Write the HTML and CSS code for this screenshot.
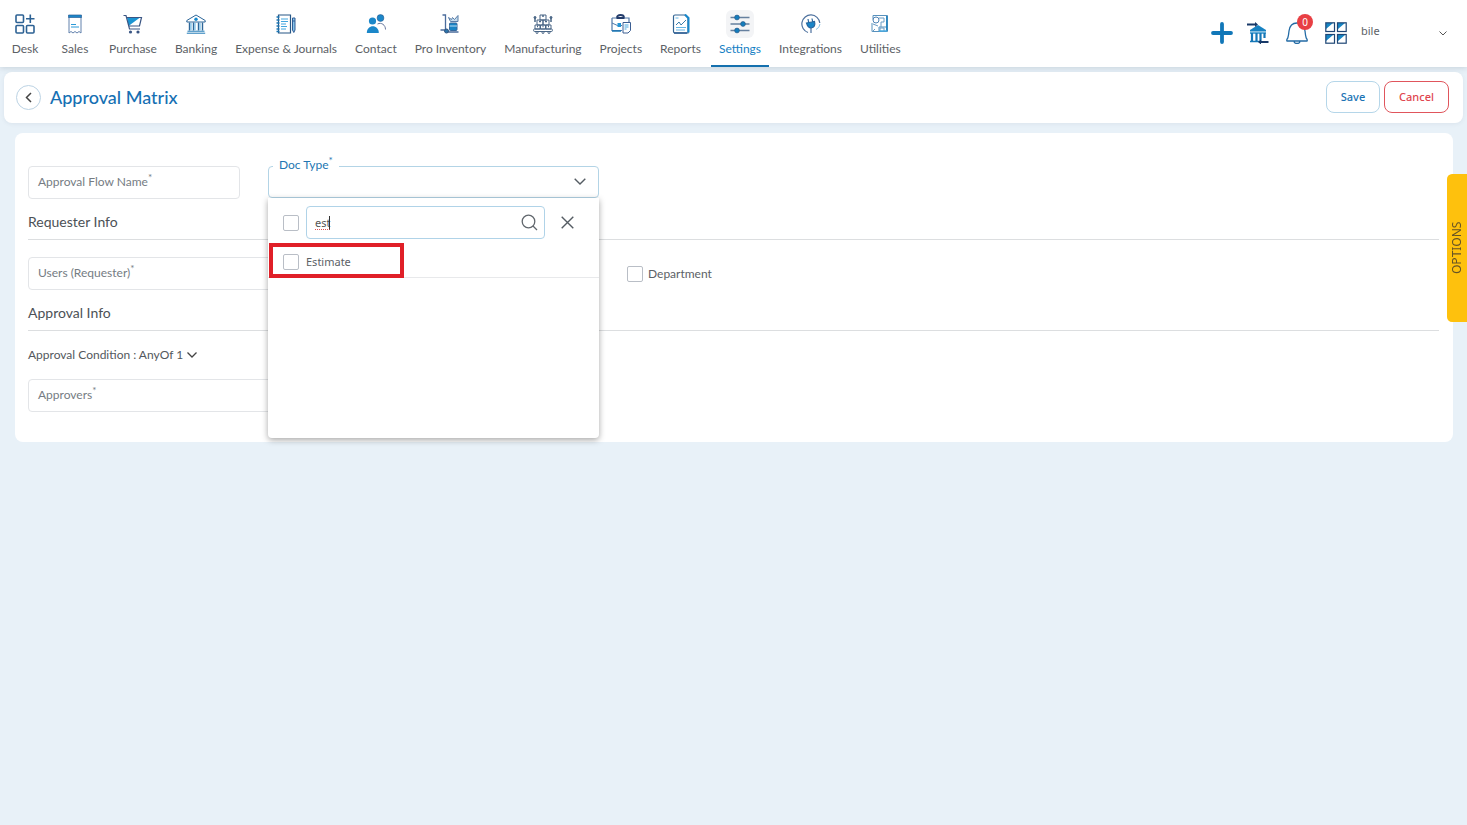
FILE: index.html
```html
<!DOCTYPE html>
<html lang="en">
<head>
<meta charset="utf-8">
<title>Approval Matrix</title>
<link rel="stylesheet" href="styles.css">
</head>
<body>
<header class="topbar">
  <nav class="nav">
    <a class="nav-item" href="#"><span class="nav-icon"><svg viewBox="0 0 20 20" fill="none" stroke="#2d6294" stroke-width="1.6"><rect x="1" y="1" width="7.5" height="7.5" rx="1"/><rect x="1" y="11.5" width="7.5" height="7.5" rx="1"/><rect x="11.5" y="11.5" width="7.5" height="7.5" rx="1"/><path d="M15.300 0.500v8.500M11 4.800h8.500"/></svg></span>Desk</a>
    <a class="nav-item" href="#"><span class="nav-icon"><svg viewBox="0 0 20 20" fill="none"><path d="M4 3v16l2-1.500 2 1.500 2-1.500 2 1.500 2-1.500 2 1.500V3" stroke="#6382ad"/><path d="M3.500 1h13v2.500h-13z" fill="#1b86c9" stroke="#2a5f96" stroke-width=".7"/><path d="M6 10.500h5M6 13h8" stroke="#2b9ad8"/></svg></span>Sales</a>
    <a class="nav-item" href="#"><span class="nav-icon"><svg viewBox="0 0 20 20" fill="none"><path d="M4 3.500h13L5.500 12z" fill="#1b94d2"/><path d="M.5 1.500h2.500L6.500 15h10.500M4 3.500h14.500l-2 8.500H6" stroke="#3a5583" stroke-width="1.200"/><circle cx="7.500" cy="18" r="1.600" fill="#3a5583"/><circle cx="15" cy="18" r="1.600" fill="#3a5583"/></svg></span>Purchase</a>
    <a class="nav-item" href="#"><span class="nav-icon"><svg viewBox="0 0 20 20" fill="none" stroke="#2d6699"><path d="M.8 6.500L10 1l9.200 5.500v1.500H.8z"/><circle cx="10" cy="5.300" r="1.700" fill="#1588cc" stroke="none"/><path d="M3.500 8.500v8M7.500 8.500v8M12.500 8.500v8M16.500 8.500v8" stroke-width="1.400"/><path d="M5 9v7M9 9v7M14 9v7" stroke="#58b2e4"/><path d="M1.500 17.200h17M.8 19.200h18.400" stroke="#1b78b5"/></svg></span>Banking</a>
    <a class="nav-item" href="#"><span class="nav-icon"><svg viewBox="0 0 20 20" fill="none"><path d="M2.500 1h12v18h-12z" stroke="#265785" stroke-width="1.200"/><path d="M.5 3h3M.5 6h3M.5 9h3M.5 12h3M.5 15h3M.5 17.500h3" stroke="#1b77b5" stroke-width="1.300"/><path d="M5 5h7M5 7.500h7M5 10h5M5 12.500h6M5 15h5" stroke="#42a6df"/><path d="M16.500 4h2.500v12l-1.200 2.500-1.300-2.500z" fill="#86c4ea" stroke="#315d96"/><path d="M16.500 7h2.500" stroke="#315d96"/></svg></span>Expense &amp; Journals</a>
    <a class="nav-item" href="#"><span class="nav-icon"><svg viewBox="0 0 20 20" fill="none"><circle cx="6.500" cy="7" r="3.600" fill="#1b87c9"/><path d="M.8 19c0-9 12-9 12 0z" fill="#1b87c9"/><circle cx="14.500" cy="4" r="3.400" fill="#1b87c9" stroke="#2b5b8e" stroke-width=".6"/><path d="M11.500 10c4-2 8 1 8 5.500" stroke="#68779c"/></svg></span>Contact</a>
    <a class="nav-item" href="#"><span class="nav-icon"><svg viewBox="0 0 20 20" fill="none"><path d="M2.500 1h3v14.500M.5 16h6M7 18h11.500" stroke="#4b6c9c" stroke-width="1.300"/><circle cx="6.500" cy="17" r="2" fill="#2c75ac" stroke="#31547f"/><rect x="9.500" y="9" width="7.500" height="7.500" rx="1" fill="#1884c5" stroke="#35679b"/><path d="M9.500 12h7.500" stroke="#b9def4"/><path d="M8.500 3.500l3 2 1-2 2 2 3.500-4v6h-7.500zM12 7.500h4" stroke="#597ca8" fill="#c1dbed"/></svg></span>Pro Inventory</a>
    <a class="nav-item" href="#"><span class="nav-icon"><svg viewBox="0 0 20 20" fill="none" stroke="#486585"><path d="M7 1h6v5H7zM4 6h6v5H4zM10 6h6v5h-6zM2 11h5v4H2zM7.500 11h5v4h-5zM13 11h5v4h-5z"/><rect x=".6" y="15" width="18.800" height="2.500" rx="1"/><path d="M9 2h2M6 7.500h2M12 7.500h2M2 4v4M18 4v4M4 12.500h1M9.500 12.500h1M15 12.500h1" stroke-width="1.500"/><circle cx="2" cy="3.500" r="1" fill="#486585"/><circle cx="18" cy="3.500" r="1" fill="#486585"/><circle cx="4" cy="18.500" r="1"/><circle cx="10" cy="18.500" r="1"/><circle cx="16" cy="18.500" r="1"/></svg></span>Manufacturing</a>
    <a class="nav-item" href="#"><span class="nav-icon"><svg viewBox="0 0 20 20" fill="none"><path d="M1 4h17v4M1 4v12.500h10" stroke="#5078a8" stroke-width="1.200"/><path d="M6 3.500q0-2.500 3.500-2.500T13 3.500" stroke="#233c6b" stroke-width="1.800"/><path d="M5.500 4h8" stroke="#233c6b" stroke-width="2"/><path d="M1 9l5.500 2.500H11" stroke="#4d78a9"/><rect x="6.500" y="9" width="3.500" height="4" fill="#2294d4"/><path d="M12 8.500h7.500v8L17 19h-5z" fill="#fff" stroke="#3c5e92"/><path d="M13.500 11h4M13.500 13h4M13.500 15h2" stroke="#46a6df"/><path d="M1 17h9" stroke="#1b77b5" stroke-width="1.500"/></svg></span>Projects</a>
    <a class="nav-item" href="#"><span class="nav-icon"><svg viewBox="0 0 20 20" fill="none"><path d="M4 1h10l3 3v15H4q-1.500 0-1.500-1.500v-15Q2.500 1 4 1z" stroke="#326594" stroke-width="1.200"/><path d="M14 .5l3.500 3.500v14.500" stroke="#1687cb" stroke-width="2"/><path d="M5 11l3-3 2 3 5-5" stroke="#397cab"/><path d="M4.500 4h3M5 13.500h10M5 16h9" stroke="#64b6e5"/><path d="M3 19h13" stroke="#2b5b91" stroke-width="1.500"/></svg></span>Reports</a>
    <a class="nav-item active" href="#"><span class="nav-icon"><svg viewBox="0 0 20 20" fill="none"><path d="M.5 3.500h19M.5 10h19M.5 16.500h19" stroke="#66809f" stroke-width="1.400"/><g fill="#137dbd" stroke="#2c5c8a" stroke-width=".7"><circle cx="7" cy="3.500" r="2.400"/><circle cx="13" cy="10" r="2.400"/><circle cx="7" cy="16.500" r="2.400"/></g></svg></span>Settings</a>
    <a class="nav-item" href="#"><span class="nav-icon"><svg viewBox="0 0 20 20" fill="none"><path d="M7 18.500A9 9 0 1 1 18.800 9M10 19v-5" stroke="#4d719e" stroke-width="1.200"/><path d="M5.500 9l8-1.500q1.500 5.500-3.500 6.500-3 0-4.500-5zM7 5l.7 3.500M11 4.500l.7 3.500" fill="#1885c8" stroke="#28669e" stroke-width="1.200"/><path d="M19 10q-.5 4-4 5.500" stroke="#8bc3e6"/></svg></span>Integrations</a>
    <a class="nav-item" href="#"><span class="nav-icon"><svg viewBox="0 0 20 20" fill="none"><path d="M3 1.500h14.500v16H5M3 1.500v4M2 9v8.500h7V13h8" stroke="#5791bd"/><path d="M16.800 2v15" stroke="#2282bd" stroke-width="1.500"/><circle cx="6" cy="6" r="3" stroke="#4e83b5"/><path d="M9 4h5v4h-3v5M3 10l5 2M10 17v-3h4v3M2 18l3-3" stroke="#6a9cc4"/><path d="M9 17h8" stroke="#48aae1" stroke-width="1.500"/></svg></span>Utilities</a>
  </nav>
  <div class="tools">
    <button class="tool" aria-label="Add"><svg width="22" height="22" viewBox="0 0 22 22"><path d="M11 2v18M2 11h18" stroke="#1177b8" stroke-width="3.800" stroke-linecap="round"/></svg></button>
    <button class="tool bank" aria-label="Bank transfer"><svg width="22" height="22" viewBox="0 0 22 22" fill="none"><path d="M3 8l8-5 8 5v1.500H3z" fill="#1782c2"/><path d="M3 10h16v2H3z" fill="#60acd8"/><path d="M5 11v8M9.500 11v8M13.500 11v8M17.500 11v5" stroke="#1477b7" stroke-width="2.200"/><path d="M3 19.500h9" stroke="#1477b7" stroke-width="1.500"/><path d="M0 2.500h9M13 20h8.500" stroke="#183968" stroke-width="2.200"/><path d="M8 0l3 2.500L8 5zM14 17.500L11 20l3 2.500z" fill="#183968"/></svg></button>
    <button class="tool" aria-label="Notifications"><svg width="22" height="22" viewBox="0 0 22 22" fill="none" stroke="#236ba5" stroke-width="1.300"><path d="M1 19q-.8-1 .8-3Q2.500 14 3 9q1-8 8-8t8 8q.5 5 1.200 7 1.600 2 .8 3zM8 19q0 2.500 3 2.500t3-2.500"/></svg><span class="badge">0</span></button>
    <button class="tool" aria-label="Apps"><svg width="22" height="22" viewBox="0 0 22 22" fill="none"><path d="M1 1h7L1 7zM13 1h7l-7 6zM1 13h7l-7 6zM13 13h7l-7 6z" fill="#1785c4"/><g stroke="#1f4675" stroke-width="1.200"><rect x=".8" y=".8" width="8.700" height="8.700"/><rect x="12.500" y=".8" width="8.700" height="8.700"/><rect x=".8" y="12.500" width="8.700" height="8.700"/><rect x="12.500" y="12.500" width="8.700" height="8.700"/></g></svg></button>
    <button class="account"><span>bile</span><svg width="8" height="5" viewBox="0 0 8 5" fill="none" stroke="#555"><path d="M.5.5L4 4 7.500.5"/></svg></button>
  </div>
</header>
<main>
  <section class="titlebar">
    <button class="back" aria-label="Back"><svg width="7" height="11" viewBox="0 0 7 11" fill="none" stroke="#444" stroke-width="1.500"><path d="M6 1L1.500 5.500 6 10"/></svg></button>
    <h1>Approval Matrix</h1>
    <button class="btn save">Save</button>
    <button class="btn cancel">Cancel</button>
  </section>
  <form class="panel">
    <div class="grid">
      <div class="field"><input id="flow" type="text"><label for="flow">Approval Flow Name<sup>*</sup></label></div>
      <div class="field doctype">
        <input id="doc" type="text" readonly><label for="doc">Doc Type<sup>*</sup></label>
        <svg class="caret" width="12" height="7" viewBox="0 0 12 7" fill="none" stroke="#555c63" stroke-width="1.400"><path d="M.7.7L6 6 11.300.7"/></svg>
        <div class="menu">
          <div class="menu-search">
            <input type="checkbox" class="check" aria-label="Select all">
            <div class="search"><input class="query" type="text" value="est" aria-label="Search" spellcheck="false"><span class="typed" aria-hidden="true"></span><svg width="17" height="17" viewBox="0 0 17 17" fill="none" stroke="#61676d" stroke-width="1.300"><circle cx="7.500" cy="7.500" r="6.300"/><path d="M12 12l4 4"/></svg></div>
            <button type="button" class="close" aria-label="Close"><svg width="13" height="13" viewBox="0 0 13 13" fill="none" stroke="#555c63" stroke-width="1.400"><path d="M.7.7l11.600 11.600M12.300.7L.7 12.300"/></svg></button>
          </div>
          <label class="option"><input type="checkbox" class="check">Estimate</label>
          <span class="highlight"></span>
        </div>
      </div>
    </div>
    <h2>Requester Info</h2>
    <div class="grid">
      <div class="field wide"><input id="users" type="text"><label for="users">Users (Requester)<sup>*</sup></label></div>
      <label class="dept"><input type="checkbox" class="check">Department</label>
    </div>
    <h2>Approval Info</h2>
    <button type="button" class="condition">Approval Condition : AnyOf 1 <svg width="10" height="6" viewBox="0 0 10 6" fill="none" stroke="#444" stroke-width="1.300"><path d="M.5.5L5 5 9.500.5"/></svg></button>
    <div class="grid">
      <div class="field wide"><input id="approvers" type="text"><label for="approvers">Approvers<sup>*</sup></label></div>
    </div>
  </form>
</main>
<button class="options">OPTIONS</button>
</body>
</html>
```
FILE: styles.css
```css
* { box-sizing: border-box; }
body {
  margin: 0;
  min-height: 100vh;
  background: #e8f1f8;
  color: #5c6166;
  font: 12px/16px Lato, "Open Sans", sans-serif;
}
button { padding: 0; border: 0; background: none; color: inherit; font: inherit; cursor: pointer; }
svg { display: block; }
.topbar {
  display: flex;
  justify-content: space-between;
  height: 67px;
  background: #fff;
  box-shadow: 0 1px 6px rgba(60, 80, 100, .2);
}
.nav { display: flex; gap: 2px; padding-left: 1px; }
.nav-item {
  display: flex;
  flex-direction: column;
  align-items: center;
  gap: 3px;
  min-width: 48px;
  padding: 10px 8px 0;
  border-bottom: 2px solid transparent;
  color: #5c6166;
  font-size: 12px;
  line-height: 16px;
  text-decoration: none;
  white-space: nowrap;
}
.nav-icon { display: grid; place-items: center; width: 28px; height: 28px; border-radius: 6px; }
.nav-icon svg { width: 20px; height: 20px; }
.active { border-color: #1470ae; color: #1580c4; }
.active .nav-icon { background: #f3f4f6; }
.tools { display: flex; align-items: flex-start; gap: 17px; padding: 22px 20px 0 0; }
.tool { position: relative; width: 22px; height: 22px; }
.bank { margin-left: -3px; }
.badge {
  position: absolute;
  top: -8px;
  right: -5px;
  width: 16px;
  height: 16px;
  border-radius: 50%;
  background: #e83f44;
  color: #fff;
  font: 10px/16px "Noto Sans", sans-serif;
  text-align: center;
}
.account { display: flex; align-items: center; justify-content: space-between; width: 86px; margin-left: -3px; font: 11px/18px "Noto Sans", sans-serif; }
.account svg { margin-top: 4px; }
.titlebar {
  display: flex;
  align-items: center;
  gap: 4px;
  margin: 5px 4px 10px;
  padding: 9px 14px 10px 12px;
  border-radius: 8px;
  background: #fff;
  box-shadow: 0 1px 4px rgba(60, 80, 100, .08);
}
.back { display: grid; place-items: center; width: 25px; height: 25px; border: 1px solid #bcd3e4; border-radius: 50%; }
h1 { flex: 1; margin: 0 0 0 5px; color: #1670b3; font-size: 18px; font-weight: 500; line-height: 24px; }
.btn { height: 32px; border: 1px solid; border-radius: 8px; font: 500 11px/16px "Noto Sans", sans-serif; }
.save { width: 54px; border-color: #b5d6e9; color: #1a73b4; }
.cancel { width: 65px; border-color: #e0555c; color: #e0454d; }
.panel { margin: 0 14px 0 15px; padding: 33px 14px 30px 13px; border-radius: 8px; background: #fff; }
.grid { display: grid; grid-template-columns: 212px 331px 1fr; column-gap: 28px; align-items: start; }
.field { position: relative; }
.field > input { display: block; width: 100%; height: 33px; border: 1px solid #e3e5e8; border-radius: 4px; background: #fff; }
.field > label { position: absolute; left: 10px; top: 8px; color: #757c83; font-size: 12px; line-height: 16px; }
sup { font-size: 10px; line-height: 0; vertical-align: 5px; }
.wide { grid-column: 1 / 3; }
.field.doctype > input { height: 32px; border-color: #b3d4e6; }
.field.doctype > label { top: -9px; left: 5px; padding: 0 6px; background: #fff; color: #2276b2; }
.caret { position: absolute; top: 12px; right: 13px; }
.menu {
  position: absolute;
  z-index: 2;
  top: 32px;
  left: 0;
  width: 100%;
  height: 240px;
  border-radius: 0 0 4px 4px;
  background: #fff;
  box-shadow: 0 2px 6px rgba(0, 0, 0, .35);
}
.menu-search { display: flex; align-items: center; padding: 8px 15px 7px; }
.check { appearance: none; flex: none; width: 16px; height: 16px; margin: 0; border: 1px solid #b9bec6; border-radius: 2px; background: #fff; }
.search { display: flex; align-items: center; position: relative; width: 239px; height: 33px; margin: 0 16px 0 7px; padding: 0 6px 0 8px; border: 1px solid #b0d3e8; border-radius: 4px; }
.query { flex: 1; min-width: 0; padding: 0; border: 0; outline: 0; color: #555; font: 11px/16px "Noto Sans", sans-serif; }
.typed { position: absolute; left: 8px; top: 9px; width: 15px; height: 14px; border-right: 1px solid #333; border-bottom: 1px dotted #e05050; }
.option { display: flex; align-items: center; gap: 7px; height: 32px; padding-left: 15px; border-bottom: 1px solid #e8e9eb; font: 11px/16px "Noto Sans", sans-serif; }
.highlight { position: absolute; top: 45px; left: 1px; width: 135px; height: 35px; border: 4px solid #e01f28; pointer-events: none; }
h2 { margin: 13px 0 17px; padding-bottom: 7px; border-bottom: 1px solid #dcdee0; color: #4c5156; font-size: 14px; font-weight: 400; line-height: 20px; }
.dept { display: flex; align-items: center; gap: 5px; padding-top: 9px; }
.condition { display: flex; align-items: center; gap: 4px; margin-bottom: 17px; color: #53585d; line-height: 14px; }
.options {
  position: fixed;
  top: 174px;
  right: 0;
  width: 20px;
  height: 148px;
  border-radius: 0 5px 5px 0;
  background: #fec10d;
  color: #665426;
  font: 12px/20px "Noto Sans", sans-serif;
  writing-mode: vertical-rl;
  transform: rotate(180deg);
}
```
